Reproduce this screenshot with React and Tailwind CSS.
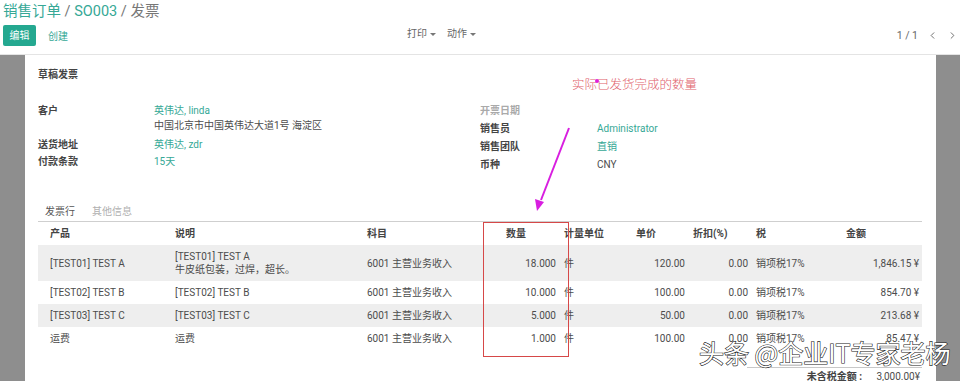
import { ChevronLeft, ChevronRight } from "lucide-react"

const rows = [
  {
    product: "[TEST01] TEST A",
    desc: ["[TEST01] TEST A", "牛皮纸包装，过焊，超长。"],
    qty: "18.000",
    price: "120.00",
    amount: "1,846.15 ¥",
    shaded: true,
  },
  { product: "[TEST02] TEST B", desc: ["[TEST02] TEST B"], qty: "10.000", price: "100.00", amount: "854.70 ¥" },
  { product: "[TEST03] TEST C", desc: ["[TEST03] TEST C"], qty: "5.000", price: "50.00", amount: "213.68 ¥", shaded: true },
  { product: "运费", desc: ["运费"], qty: "1.000", price: "100.00", amount: "85.47 ¥" },
]

const cols = "grid grid-cols-[125px_192px_127px_78px_54px_75px_63px_90px_80px]"

function Caret() {
  return <span className="inline-block ml-[3px] align-middle border-x-[3px] border-t-[3px] border-x-transparent border-t-[#777]"></span>
}

export default function App() {
  return (
    <div className="relative h-[381px] w-[960px] overflow-hidden bg-white font-['Roboto','Noto_Sans_CJK_SC',sans-serif] text-[10px] text-[#4c4c4c]">
      {/* control panel */}
      <div className="h-[55px] border-b border-[#e4e4e4]">
        <div className="h-[24px] pl-[3px] text-[14.5px] leading-[24px] text-[#777]">
          <span className="text-[#36a896]">销售订单</span>
          <span> / </span>
          <span className="text-[#36a896]">SO003</span>
          <span> / 发票</span>
        </div>
        <div className="flex h-[30px]">
          <div className="flex w-[407px] items-start pl-[3px] pt-[1px]">
            <button className="h-[21px] w-[33px] rounded-[2px] bg-[#24a890] text-[10px] text-white">编辑</button>
            <span className="ml-[12px] mt-[4px] text-[#36a896]">创建</span>
          </div>
          <div className="flex items-start gap-[11px] pt-[2px] text-[#666]">
            <span>打印<Caret /></span>
            <span>动作<Caret /></span>
          </div>
          <div className="ml-auto flex items-start pr-[2px] pt-[4px] text-[#666]">
            <span className="text-[10.5px]">1 / 1</span>
            <ChevronLeft className="ml-[9px] mt-[2px]" size={11} strokeWidth={2} color="#666" />
            <ChevronRight className="ml-[9px] mt-[2px]" size={11} strokeWidth={2} color="#666" />
          </div>
        </div>
      </div>

      {/* sheet area */}
      <div className="flex h-[326px]">
        <div className="w-[25px] bg-[#8e8e8e]"></div>
        <div className="flex-1 bg-white pl-[13px] pr-[14px] pt-[13px]">
          <div className="h-[14px] font-bold leading-[14px] text-[#444]">草稿发票</div>

          <div className="mt-[21px] flex">
            <div className="w-[442px]">
              <div className="flex leading-[15px]">
                <div className="w-[116px] font-bold text-[#444]">客户</div>
                <div>
                  <div className="text-[#36a896]">英伟达, linda</div>
                  <div>中国北京市中国英伟达大道1号 海淀区</div>
                </div>
              </div>
              <div className="mt-[4px] flex leading-[15px]">
                <div className="w-[116px] font-bold text-[#444]">送货地址</div>
                <div className="text-[#36a896]">英伟达, zdr</div>
              </div>
              <div className="mt-[2px] flex leading-[15px]">
                <div className="w-[116px] font-bold text-[#444]">付款条款</div>
                <div className="text-[#36a896]">15天</div>
              </div>
            </div>
            <div className="-mt-[1px] w-[442px]">
              <div className="flex h-[18px] leading-[18px]">
                <div className="w-[117px] font-bold text-[#aaa]">开票日期</div>
              </div>
              <div className="flex h-[18px] leading-[18px]">
                <div className="w-[117px] font-bold text-[#444]">销售员</div>
                <div className="text-[#36a896]">Administrator</div>
              </div>
              <div className="flex h-[18px] leading-[18px]">
                <div className="w-[117px] font-bold text-[#444]">销售团队</div>
                <div className="text-[#36a896]">直销</div>
              </div>
              <div className="flex h-[18px] leading-[18px]">
                <div className="w-[117px] font-bold text-[#444]">币种</div>
                <div>CNY</div>
              </div>
            </div>
          </div>

          {/* tabs */}
          <div className="mt-[28px] flex h-[20px] items-center border-b border-[#cfcfcf] pl-[7px] leading-[20px]">
            <span className="text-[#555]">发票行</span>
            <span className="ml-[17px] text-[#b0b0b0]">其他信息</span>
          </div>

          {/* lines table */}
          <div className={`${cols} h-[23px] items-center font-bold text-[#444]`}>
            <div className="pl-[12px]">产品</div>
            <div className="pl-[12px]">说明</div>
            <div className="pl-[12px]">科目</div>
            <div className="pl-[24px]">数量</div>
            <div className="pl-[4px]">计量单位</div>
            <div className="pl-[22px]">单价</div>
            <div className="pl-[4px]">折扣(%)</div>
            <div className="pl-[4px]">税</div>
            <div className="pl-[4px]">金额</div>
          </div>
          {rows.map((r) => (
            <div
              key={r.product}
              className={`${cols} items-center ${r.desc.length > 1 ? "h-[36px]" : "h-[23px]"} ${r.shaded ? "bg-[#eeeeee]" : "bg-white"}`}
            >
              <div className="pl-[12px]">{r.product}</div>
              <div className="pl-[12px] leading-[13px]">
                {r.desc.map((d) => (
                  <div key={d}>{d}</div>
                ))}
              </div>
              <div className="pl-[12px]">6001 主营业务收入</div>
              <div className="pr-[4px] text-right">{r.qty}</div>
              <div className="pl-[4px]">件</div>
              <div className="pr-[4px] text-right">{r.price}</div>
              <div className="pr-[4px] text-right">0.00</div>
              <div className="pl-[4px]">销项税17%</div>
              <div className="pr-[3px] text-right">{r.amount}</div>
            </div>
          ))}

          {/* totals */}
          <div className="mt-[17px] flex justify-end">
            <div className="grid w-[175px] grid-cols-[115px_60px] border-t border-[#c8c8c8] pt-[1px] leading-[16px]">
              <div className="text-right font-bold text-[#444]">未含税金额 :</div>
              <div className="pr-[2px] text-right">3,000.00¥</div>
            </div>
          </div>
        </div>
        <div className="w-[24px] bg-[#8e8e8e]"></div>
      </div>

      {/* annotation overlays */}
      <div className="absolute left-[572px] top-[76px] text-[12.5px] leading-[18px] font-light text-[#e0606a]">实际已发货完成的数量</div>
      <div className="absolute left-[483px] top-[222px] h-[135px] w-[86px] border-[1.5px] border-[#d64848]"></div>
      <svg className="pointer-events-none absolute left-0 top-0" width="960" height="381">
        <circle cx="597" cy="81" r="2" fill="#e020d8" />
        <line x1="569" y1="128" x2="541" y2="200" stroke="#d81ee0" strokeWidth="2" />
        <polygon points="535,199 544,202 537,211" fill="#d81ee0" />
      </svg>
      <div className="absolute left-[699px] top-[336px] text-[25px] leading-[32px] font-['Noto_Sans_CJK_SC',sans-serif] text-white [-webkit-text-stroke:1.2px_#222] [paint-order:stroke_fill]">
        头条 @企业IT专家老杨
      </div>
    </div>
  )
}
